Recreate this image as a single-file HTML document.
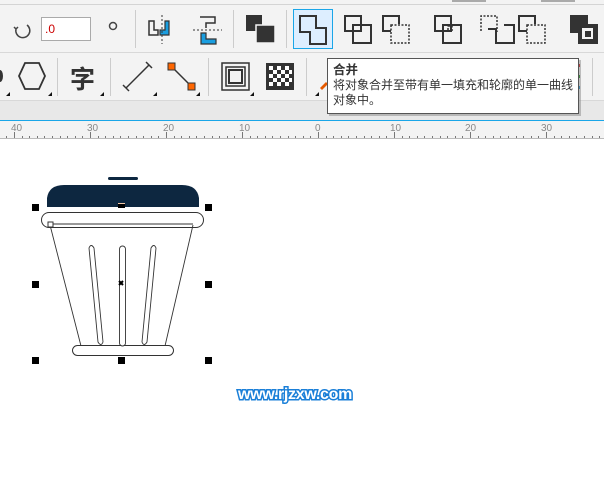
<!DOCTYPE html>
<html><head><meta charset="utf-8"><style>
*{margin:0;padding:0;box-sizing:border-box}
body{width:604px;height:496px;overflow:hidden;background:#fff;position:relative;font-family:"Liberation Sans","Noto Sans CJK SC",sans-serif}
.a{position:absolute}
</style></head><body>
<div class="a" style="left:0;top:0;width:604px;height:4px;background:#f3f3f3"></div>
<div class="a" style="left:0;top:4px;width:604px;height:1px;background:#d4d4d4"></div>
<div class="a" style="left:0;top:5px;width:604px;height:47px;background:#f3f3f3"></div>
<div class="a" style="left:0;top:52px;width:604px;height:1px;background:#d8d8d8"></div>
<div class="a" style="left:0;top:53px;width:604px;height:47px;background:#f3f3f3"></div>
<div class="a" style="left:0;top:100px;width:604px;height:1px;background:#d8d8d8"></div>
<div class="a" style="left:0;top:101px;width:604px;height:19px;background:#e8e8e8"></div>
<div class="a" style="left:0;top:120px;width:604px;height:1px;background:#1aa6e8"></div>
<div class="a" style="left:0;top:121px;width:604px;height:17px;background:#f3f3f3"></div>
<div class="a" style="left:0;top:138px;width:604px;height:1px;background:#bbb"></div>
<div class="a" style="left:452px;top:0;width:34px;height:2px;background:#aaa"></div>
<div class="a" style="left:541px;top:0;width:34px;height:2px;background:#aaa"></div>
<div class="a" style="left:41px;top:17px;width:50px;height:24px;background:#fff;border:1px solid #aaa;font-size:12px;padding:4px 3px;color:#c00">.0</div>
<svg class="a" style="left:0;top:0" width="604" height="140">
<g fill="none" stroke="#444" stroke-width="1.5">
<path d="M27 25 A7 7 0 1 1 16 29 M14 27 l2 2 l2 -2"/>
<circle cx="113" cy="26" r="3.5"/>
</g>
<g stroke="#ccc"><line x1="135.5" y1="10" x2="135.5" y2="48"/><line x1="233.5" y1="10" x2="233.5" y2="48"/><line x1="286.5" y1="10" x2="286.5" y2="48"/><line x1="57.5" y1="58" x2="57.5" y2="96"/><line x1="110.5" y1="58" x2="110.5" y2="96"/><line x1="208.5" y1="58" x2="208.5" y2="96"/><line x1="306.5" y1="58" x2="306.5" y2="96"/><line x1="592.5" y1="58" x2="592.5" y2="96"/></g>
<path d="M149 21h5v9h4v5h-9z" fill="none" stroke="#333" stroke-width="1.5"/>
<path d="M165 21h4v14h-9v-5h5z" fill="#1a9ee0" stroke="#333" stroke-width="1.2"/>
<line x1="162" y1="15" x2="162" y2="44" stroke="#333" stroke-dasharray="2 2"/>
<path d="M200 17h15v6h-9v5" fill="none" stroke="#333" stroke-width="1.5"/>
<line x1="193" y1="30" x2="222" y2="30" stroke="#333" stroke-dasharray="2 2"/>
<path d="M201 33h5v6h10v5h-15z" fill="#1a9ee0" stroke="#333" stroke-width="1.2"/>
<rect x="246" y="15" width="16" height="16" fill="#333"/>
<rect x="256" y="25" width="19" height="18" fill="#333" stroke="#f3f3f3" stroke-width="1.5"/>
<rect x="293.5" y="9.5" width="39" height="39" fill="#ddeeff" stroke="#1aa6e8"/>
<path d="M300 16h16v12h10v16h-16v-12h-10z" fill="none" stroke="#333" stroke-width="2"/>
<g fill="none" stroke="#333" stroke-width="2">
<rect x="345" y="16" width="16" height="15"/><rect x="353" y="25" width="18" height="18"/>
<path d="M391 31h-8v-15h16v8"/>
<rect x="435" y="16" width="16" height="15"/><rect x="443" y="25" width="18" height="18"/>
<path d="M527 31h-8v-15h16v8"/>
</g>
<g fill="none" stroke="#333" stroke-width="1.5" stroke-dasharray="2 1.5">
<rect x="391" y="25" width="18" height="18"/><rect x="527" y="25" width="18" height="18"/>
<path d="M481 31v-15h16v16"/><path d="M448 26h4v5h-4z"/>
</g>
<path d="M488 29h8v14h18v-18h-10" fill="none" stroke="#333" stroke-width="2"/>
<rect x="570" y="15" width="18" height="18" fill="#333"/><rect x="578" y="24" width="20" height="20" fill="#333"/><rect x="582" y="28" width="11" height="11" fill="#f3f3f3"/><rect x="585" y="31" width="6" height="6" fill="#333"/>
<path d="M0 70a3 6 0 0 1 0 12" fill="#333"/>
<polygon points="25,63 39,63 45,76 39,89 25,89 19,76" fill="none" stroke="#333" stroke-width="1.8"/>
<text x="70" y="88" font-size="25" font-weight="bold" fill="#333" font-family="Noto Sans CJK SC,sans-serif">字</text>
<line x1="126" y1="88" x2="149" y2="65" stroke="#333" stroke-width="1.5"/><line x1="123" y1="85" x2="129" y2="91" stroke="#333" stroke-width="1.5"/><line x1="146" y1="62" x2="152" y2="68" stroke="#333" stroke-width="1.5"/>
<line x1="172" y1="67" x2="192" y2="87" stroke="#333" stroke-width="1.5"/>
<rect x="168" y="63" width="7" height="7" fill="#f60" stroke="#333"/><rect x="188" y="83" width="7" height="7" fill="#f60" stroke="#333"/>
<g fill="none" stroke="#333" stroke-width="1.5"><rect x="222" y="63" width="27" height="27"/><rect x="226" y="67" width="19" height="19"/><rect x="229" y="70" width="13" height="13" stroke-width="2"/></g>
<rect x="266" y="63" width="28" height="27" fill="#333"/>
<g fill="#fff"><rect x="269" y="66" width="4" height="4"/><rect x="277" y="66" width="4" height="4"/><rect x="285" y="66" width="4" height="4"/><rect x="273" y="70" width="4" height="4"/><rect x="281" y="70" width="4" height="4"/><rect x="289" y="70" width="3" height="4"/><rect x="269" y="74" width="4" height="4"/><rect x="277" y="74" width="4" height="4"/><rect x="285" y="74" width="4" height="4"/><rect x="273" y="78" width="4" height="4"/><rect x="281" y="78" width="4" height="4"/><rect x="289" y="78" width="3" height="4"/><rect x="269" y="82" width="4" height="4"/><rect x="277" y="82" width="4" height="4"/><rect x="285" y="82" width="4" height="4"/></g>
<g fill="#111"><path d="M6 96h4v-4z"/><path d="M48 96h4v-4z"/><path d="M100 96h4v-4z"/><path d="M153 96h4v-4z"/><path d="M196 96h4v-4z"/><path d="M250 96h4v-4z"/><path d="M315 96h4v-4z"/></g>
<path d="M320 88l6-6 2 2-6 6z" fill="#e55a00"/>
<rect x="578" y="64" width="2" height="3" fill="#c00"/><rect x="578" y="75" width="2" height="3" fill="#080"/><rect x="578" y="86" width="2" height="3" fill="#08c"/>
<g fill="#888" font-size="10" font-family="Liberation Sans">
<text x="11" y="131">40</text><text x="87" y="131">30</text><text x="163" y="131">20</text><text x="239" y="131">10</text><text x="315" y="131">0</text><text x="390" y="131">10</text><text x="465" y="131">20</text><text x="541" y="131">30</text>
</g>
</svg>
<svg class="a" style="left:0;top:130px" width="604" height="9" id="rl"></svg>
<script>
var s='';for(var i=-45;i<=40;i++){var x=Math.round(318+i*7.6);var big=(i%10==0);s+='<line x1="'+(x+.5)+'" x2="'+(x+.5)+'" y1="'+(big?2:6)+'" y2="8" stroke="#777"/>';}document.getElementById('rl').innerHTML=s;
</script>
<div class="a" style="left:329px;top:60px;width:252px;height:56px;background:#888;opacity:.5"></div>
<div class="a" style="left:327px;top:58px;width:252px;height:56px;background:#fff;border:1px solid #555;padding:4px 5px;font-family:'Liberation Sans','Noto Sans CJK SC',sans-serif;font-size:12px;line-height:15px;color:#333;white-space:nowrap">
<div style="font-weight:bold;font-size:12.5px">合并</div><div>将对象合并至带有单一填充和轮廓的单一曲线</div><div>对象中。</div></div>
<svg class="a" style="left:0;top:160px" width="260" height="220">
<rect x="108" y="17" width="30" height="3" rx="1.5" fill="#0d2740"/>
<path d="M47 47 L47 38 Q49 25 64 25 L182 25 Q197 25 199 38 L199 47 Z" fill="#0d2740"/>
<rect x="118" y="43" width="7" height="4" fill="#f0c8a8"/>
<rect x="41.5" y="52.5" width="162" height="15" rx="7.5" fill="#fff" stroke="#333"/>
<path d="M50 65 L81 186 M193 65 L165 186 M50 64 L193 64" fill="none" stroke="#333" stroke-width=".9"/>
<rect x="72.5" y="185.5" width="101" height="10" rx="5" fill="#fff" stroke="#333"/>
<g fill="#fff" stroke="#333" stroke-width=".9">
<path d="M89 88 Q91 83 94 88 L103 182 Q101 187 98 182 Z"/>
<rect x="119.5" y="86" width="6" height="100" rx="3"/>
<path d="M151 88 Q154 83 156 88 L147 182 Q144 187 142 182 Z"/>
</g>
<rect x="48" y="62" width="5" height="5" fill="#fff" stroke="#333"/>
<g fill="#000">
<rect x="32" y="44" width="7" height="7"/><rect x="118" y="44" width="7" height="4"/><rect x="205" y="44" width="7" height="7"/>
<rect x="32" y="121" width="7" height="7"/><rect x="205" y="121" width="7" height="7"/>
<rect x="32" y="197" width="7" height="7"/><rect x="118" y="197" width="7" height="7"/><rect x="205" y="197" width="7" height="7"/>
<path d="M119 121l4 4m0-4l-4 4" stroke="#000" stroke-width="2"/>
</g>
</svg>
<div class="a" style="left:238px;top:386px;font-size:16px;font-weight:bold;color:#fff;-webkit-text-stroke:3px #1a7fd8;paint-order:stroke fill;letter-spacing:-0.3px">www.rjzxw.com</div>
</body></html>
